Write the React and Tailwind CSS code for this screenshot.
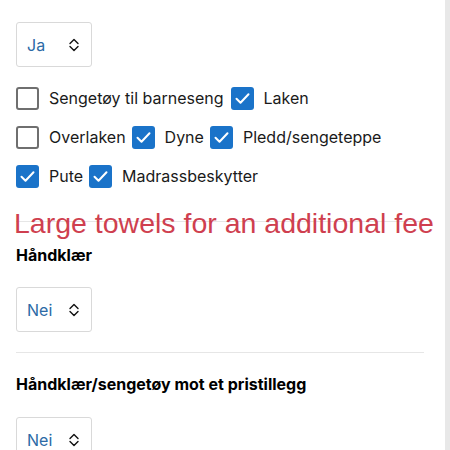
import React from "react";

function Chevrons() {
  return (
    <svg width="12" height="16" viewBox="0 0 12 16" fill="none" stroke="#111" strokeWidth="1.4" strokeLinecap="round" strokeLinejoin="round">
      <path d="M2 6.5 L6 2.5 L10 6.5" />
      <path d="M2 9.5 L6 13.5 L10 9.5" />
    </svg>
  );
}

function Select({ value }) {
  return (
    <div className="w-[76px] h-[45px] border border-[#d9d9d9] rounded-[3px] bg-white flex items-center pl-[10px] shrink-0">
      <span className="text-[16px] text-[#2c6aa6] w-[41px]">{value}</span>
      <Chevrons />
    </div>
  );
}

function Box({ checked }) {
  if (checked) {
    return (
      <div className="w-[23px] h-[23px] rounded-[3px] bg-[#1a73c9] flex items-center justify-center shrink-0">
        <svg width="17" height="17" viewBox="0 0 17 17" fill="none" stroke="#fff" strokeWidth="2" strokeLinecap="round" strokeLinejoin="round">
          <path d="M2.5 8.8 L6.5 12.8 L14.5 4.2" />
        </svg>
      </div>
    );
  }
  return <div className="w-[23px] h-[23px] rounded-[3px] border-2 border-[#6f6f6f] bg-white shrink-0" />;
}

function Item({ checked, label }) {
  return (
    <div className="flex items-center gap-[10px] h-[22px]">
      <Box checked={checked} />
      <span className="text-[16px] leading-[22px] text-[#1a1a1a]">{label}</span>
    </div>
  );
}

export default function App() {
  return (
    <div className="w-[450px] h-[450px] overflow-hidden bg-white flex" style={{ fontFamily: "Inter, 'Noto Sans', sans-serif" }}>
      <div className="relative flex-1 pl-[16px] pr-[21px] pt-[22px]">
        <Select value="Ja" />
        <div className="mt-[20px] flex flex-col gap-[17px]">
          <div className="flex items-center gap-[7px]">
            <Item label="Sengetøy til barneseng" />
            <Item checked label="Laken" />
          </div>
          <div className="flex items-center gap-[6px]">
            <Item label="Overlaken" />
            <Item checked label="Dyne" />
            <Item checked label="Pledd/sengeteppe" />
          </div>
          <div className="flex items-center gap-[6px]">
            <Item checked label="Pute" />
            <Item checked label="Madrassbeskytter" />
          </div>
        </div>
        <div className="mt-[34px] h-px bg-[#e6e6e6]" />
        <div className="mt-[23px] text-[16px] leading-[20px] font-bold text-black">Håndklær</div>
        <div className="mt-[22px]">
          <Select value="Nei" />
        </div>
        <div className="mt-[20px] h-px bg-[#e6e6e6]" />
        <div className="mt-[21px] text-[16px] leading-[20px] font-bold text-black">Håndklær/sengetøy mot et pristillegg</div>
        <div className="mt-[23px]">
          <Select value="Nei" />
        </div>
        <div
          className="absolute left-[14px] top-[209px] text-[28.5px] leading-none text-[#cf3f4f] whitespace-nowrap"
          style={{ fontFamily: "'Liberation Sans', Arial, sans-serif" }}
        >
          Large towels for an additional fee
        </div>
      </div>
      <div className="w-[5px] h-full bg-[#e8e8e8]" />
    </div>
  );
}
